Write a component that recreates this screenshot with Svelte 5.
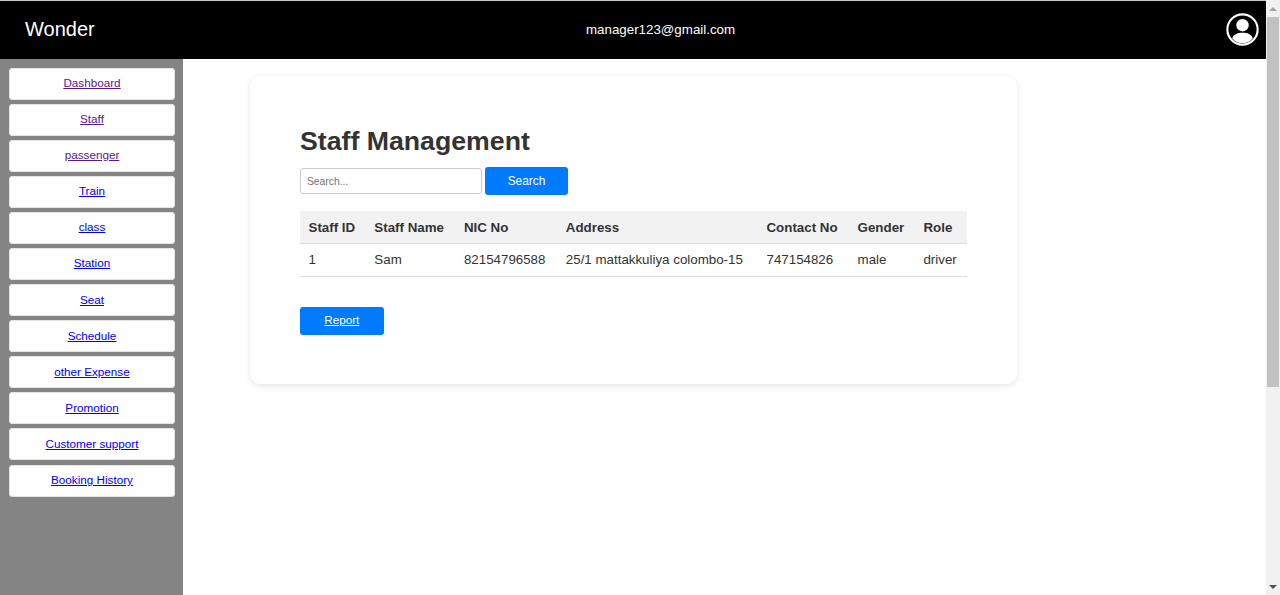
<script>
  const links = [
    { label: 'Dashboard', visited: true },
    { label: 'Staff', visited: true },
    { label: 'passenger', visited: true },
    { label: 'Train' },
    { label: 'class' },
    { label: 'Station' },
    { label: 'Seat' },
    { label: 'Schedule' },
    { label: 'other Expense' },
    { label: 'Promotion' },
    { label: 'Customer support' },
    { label: 'Booking History' }
  ];

  const columns = ['Staff ID', 'Staff Name', 'NIC No', 'Address', 'Contact No', 'Gender', 'Role'];
  const rows = [['1', 'Sam', '82154796588', '25/1 mattakkuliya colombo-15', '747154826', 'male', 'driver']];
</script>

<div class="window">
  <div class="page">
    <header class="topbar">
      <span class="brand">Wonder</span>
      <span class="email">manager123@gmail.com</span>
      <svg class="avatar" viewBox="0 0 34 34" width="33" height="33" aria-hidden="true">
        <circle cx="17" cy="17" r="15.6" fill="none" stroke="#fff" stroke-width="2.2" />
        <circle cx="17" cy="12.6" r="6.4" fill="#fff" />
        <path d="M6.4 26.2C8 21.6 12 20.4 17 20.4s9 1.2 10.6 5.8C25 29.6 21.2 31 17 31S9 29.6 6.4 26.2z" fill="#fff" />
      </svg>
    </header>

    <div class="body">
      <nav class="sidebar">
        {#each links as link}
          <div class="nav-item">
            <a href="#top" class:visited={link.visited}>{link.label}</a>
          </div>
        {/each}
      </nav>

      <main class="content">
        <section class="card">
          <h1>Staff Management</h1>
          <form class="search">
            <input type="text" placeholder="Search..." />
            <button type="button">Search</button>
          </form>
          <table>
            <thead>
              <tr>
                {#each columns as column}
                  <th>{column}</th>
                {/each}
              </tr>
            </thead>
            <tbody>
              {#each rows as row}
                <tr>
                  {#each row as cell}
                    <td>{cell}</td>
                  {/each}
                </tr>
              {/each}
            </tbody>
          </table>
          <a class="report" href="#top">Report</a>
        </section>
      </main>
    </div>
  </div>

  <div class="scrollbar">
    <div class="arrow"><span class="tri up"></span></div>
    <div class="track"><div class="thumb"></div></div>
    <div class="arrow"><span class="tri down"></span></div>
  </div>
</div>

<style>
  :global(body) {
    margin: 0;
    overflow: hidden;
    font-family: 'Liberation Sans', Arial, sans-serif;
    background: #fff;
  }

  .window {
    display: flex;
    height: 595px;
    overflow: hidden;
  }

  .page {
    flex: 1;
    min-width: 0;
    display: flex;
    flex-direction: column;
  }

  .topbar {
    box-sizing: border-box;
    height: 59px;
    flex: none;
    display: flex;
    align-items: center;
    padding: 0 7px 2px 25px;
    border-top: 1px solid #c8c8c8;
    background: #000;
    color: #fff;
  }

  .brand {
    flex: none;
    width: 561px;
    font-size: 20px;
  }

  .email {
    font-size: 13.33px;
  }

  .avatar {
    display: block;
    margin-left: auto;
  }

  .body {
    flex: 1;
    display: flex;
    min-height: 0;
  }

  .sidebar {
    box-sizing: border-box;
    width: 183px;
    flex: none;
    padding: 8.5px 8px 0 9px;
    background: #848484;
  }

  .nav-item {
    box-sizing: border-box;
    height: 32px;
    margin-bottom: 4.1px;
    padding-bottom: 2px;
    display: flex;
    align-items: center;
    justify-content: center;
    background: #fff;
    border-radius: 3px;
    border: 1px solid #e4e4e4;
    font-size: 11.7px;
  }

  .nav-item a {
    color: #0000ee;
  }

  .nav-item a.visited {
    color: #551a8b;
  }

  .content {
    flex: 1;
    min-width: 0;
    padding: 17px 0 0 67px;
  }

  .card {
    box-sizing: border-box;
    width: 767px;
    height: 308px;
    padding: 50px 50px 0;
    background: #fff;
    border-radius: 10px;
    box-shadow: 0 2px 6px rgba(0, 0, 0, 0.1);
  }

  h1 {
    margin: 0 0 10px;
    font-size: 26.7px;
    line-height: 31px;
    font-weight: 700;
    color: #333;
  }

  .search {
    display: flex;
    align-items: center;
    gap: 3px;
    margin: 0 0 16px;
  }

  input {
    box-sizing: border-box;
    width: 182px;
    height: 26px;
    padding: 0 6px;
    border: 1px solid #ccc;
    border-radius: 3px;
    font: 10.3px 'Liberation Sans', Arial, sans-serif;
    outline: none;
  }

  input::placeholder {
    color: #757575;
  }

  button {
    width: 83px;
    height: 28px;
    padding: 0 0 1px;
    border: 0;
    border-radius: 3px;
    background: #007bff;
    color: #fff;
    font: 11.9px 'Liberation Sans', Arial, sans-serif;
  }

  table {
    width: 667px;
    border-collapse: collapse;
    font-size: 13.33px;
    color: #333;
  }

  th,
  td {
    height: 32.5px;
    padding: 0 8.5px;
    box-sizing: border-box;
    text-align: left;
    white-space: nowrap;
    border-bottom: 1px solid #ddd;
  }

  th {
    background: #f2f2f2;
    font-weight: 700;
  }

  .report {
    box-sizing: border-box;
    display: flex;
    align-items: center;
    justify-content: center;
    width: 83.5px;
    height: 28px;
    margin-top: 30px;
    padding-bottom: 2px;
    border-radius: 3px;
    background: #007bff;
    color: #fff;
    font-size: 11.7px;
  }

  .scrollbar {
    width: 14px;
    flex: none;
    display: flex;
    flex-direction: column;
    background: #f1f1f1;
  }

  .arrow {
    height: 17px;
    flex: none;
    display: flex;
    align-items: center;
    justify-content: center;
  }

  .tri {
    width: 0;
    height: 0;
    border-left: 4px solid transparent;
    border-right: 4px solid transparent;
  }

  .tri.up {
    border-bottom: 4px solid #a3a3a3;
  }

  .tri.down {
    border-top: 4px solid #505050;
  }

  .track {
    flex: 1;
  }

  .thumb {
    height: 370px;
    margin: 0 1px;
    background: #c1c1c1;
  }
</style>
